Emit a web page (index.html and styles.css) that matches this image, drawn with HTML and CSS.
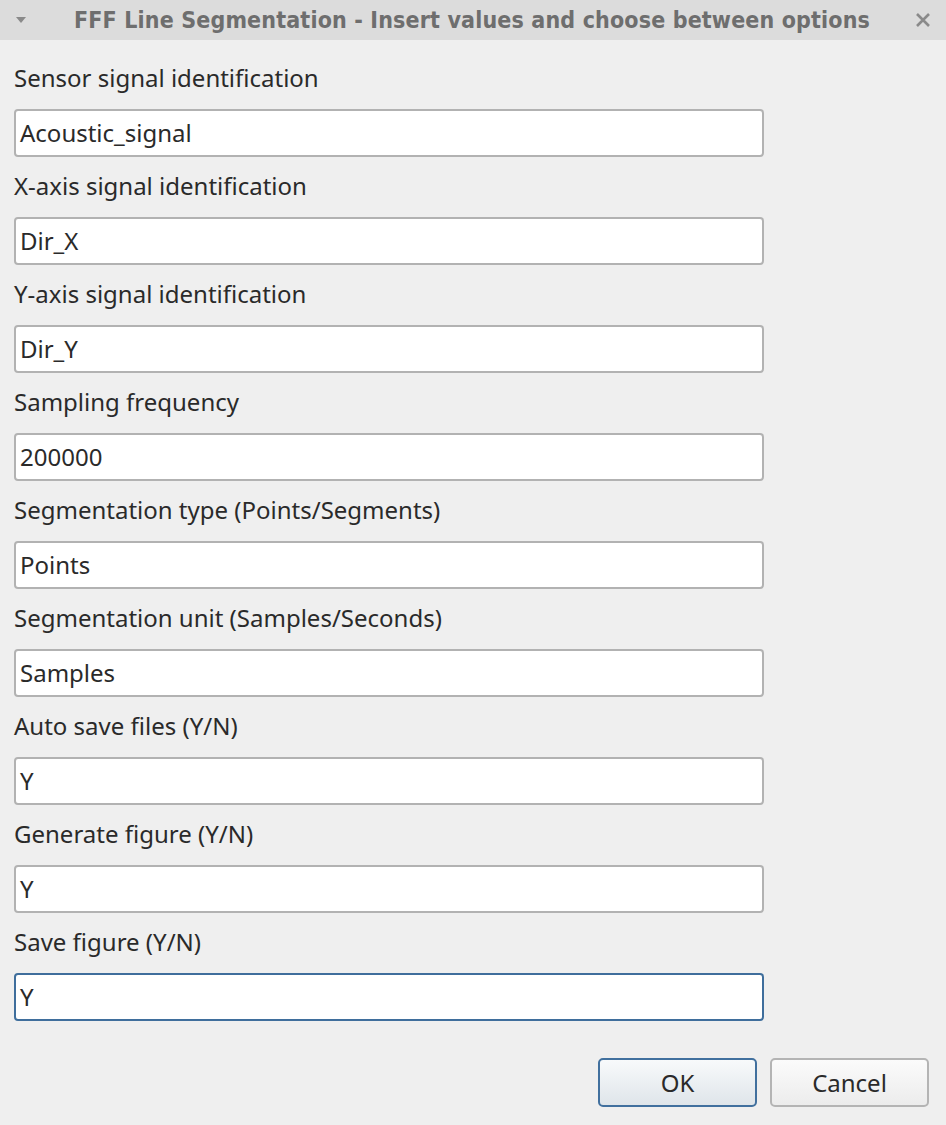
FILE: index.html
```html
<!DOCTYPE html>
<html>
<head>
<meta charset="utf-8">
<link rel="stylesheet" href="styles.css">
</head>
<body>
<div class="window">
  <div class="titlebar">
    <span class="menu-arrow"><svg width="12" height="8" viewBox="0 0 12 8"><path d="M1 1 L11 1 L6 7 Z" fill="#8a8a8a"/></svg></span>
    <span class="title">FFF Line Segmentation - Insert values and choose between options</span>
    <span class="close"><svg width="16" height="16" viewBox="0 0 16 16"><path d="M2 2 L14 14 M14 2 L2 14" stroke="#8a8a8a" stroke-width="2.6"/></svg></span>
  </div>
  <div class="form">
    <div class="field"><label class="lbl">Sensor signal identification</label><div class="input">Acoustic_signal</div></div>
    <div class="field"><label class="lbl">X-axis signal identification</label><div class="input">Dir_X</div></div>
    <div class="field"><label class="lbl">Y-axis signal identification</label><div class="input">Dir_Y</div></div>
    <div class="field"><label class="lbl">Sampling frequency</label><div class="input">200000</div></div>
    <div class="field"><label class="lbl">Segmentation type (Points/Segments)</label><div class="input">Points</div></div>
    <div class="field"><label class="lbl">Segmentation unit (Samples/Seconds)</label><div class="input">Samples</div></div>
    <div class="field"><label class="lbl">Auto save files (Y/N)</label><div class="input">Y</div></div>
    <div class="field"><label class="lbl">Generate figure (Y/N)</label><div class="input">Y</div></div>
    <div class="field"><label class="lbl">Save figure (Y/N)</label><div class="input focused">Y</div></div>
  </div>
  <div class="buttons">
    <div class="btn default">OK</div>
    <div class="btn">Cancel</div>
  </div>
</div>
</body>
</html>
```
FILE: styles.css
```css
html, body {
  margin: 0;
  padding: 0;
  background: #efefef;
}
.window {
  width: 946px;
  height: 1125px;
  display: flex;
  flex-direction: column;
  font-family: "Noto Sans", "Open Sans", sans-serif;
  color: #2a2a2a;
  background: #efefef;
}
.titlebar {
  height: 40px;
  background: #dcdcdc;
  display: flex;
  align-items: center;
}
.menu-arrow {
  width: 12px;
  margin-left: 15px;
  display: flex;
}
.title {
  margin-left: 47px;
  font-family: "DejaVu Sans Condensed", "DejaVu Sans", sans-serif;
  font-weight: bold;
  font-size: 23px;
  letter-spacing: 0.15px;
  color: #6e6e6e;
  white-space: nowrap;
}
.close {
  margin-left: auto;
  margin-right: 15px;
  display: flex;
}
.form {
  display: flex;
  flex-direction: column;
  padding: 23px 183px 0 14px;
  gap: 14px;
}
.field {
  display: flex;
  flex-direction: column;
  gap: 16px;
}
.lbl {
  font-size: 24px;
  line-height: 30px;
  height: 30px;
  white-space: nowrap;
}
.input {
  box-sizing: border-box;
  height: 48px;
  width: 750px;
  background: #ffffff;
  border: 2px solid #b2b2b2;
  border-radius: 4px;
  font-size: 24px;
  line-height: 44px;
  padding-left: 4px;
}
.input.focused {
  border-color: #3f6e9c;
}
.buttons {
  display: flex;
  justify-content: flex-end;
  gap: 13px;
  padding: 37px 17px 0 0;
}
.btn {
  box-sizing: border-box;
  width: 159px;
  height: 49px;
  border: 2px solid #b4b4b4;
  border-radius: 5px;
  background: linear-gradient(#fbfbfb, #ececec);
  font-size: 24px;
  line-height: 45px;
  text-align: center;
}
.btn.default {
  border-color: #41709e;
  background: linear-gradient(#f8fafb, #dfe5ea);
}
```
